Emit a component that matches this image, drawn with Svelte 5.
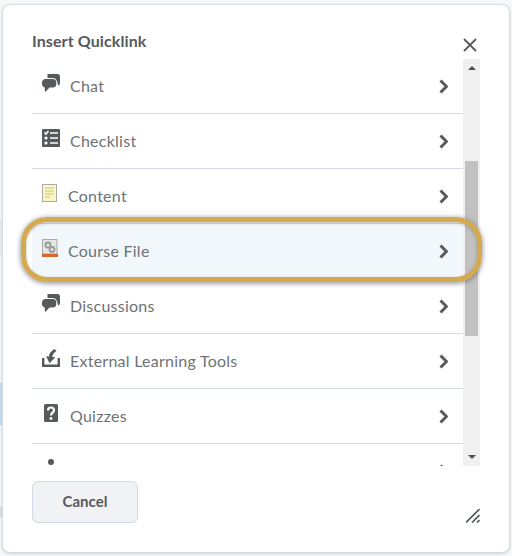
<script>
	const rows = [
		{ name: 'Chat', icon: 'chat' },
		{ name: 'Checklist', icon: 'checklist' },
		{ name: 'Content', icon: 'content', small: true },
		{ name: 'Course File', icon: 'file', small: true, active: true },
		{ name: 'Discussions', icon: 'chat' },
		{ name: 'External Learning Tools', icon: 'external' },
		{ name: 'Quizzes', icon: 'quiz' },
		{ name: '', icon: 'dot' }
	];
</script>

{#snippet icon(kind)}
	<svg class="icon" class:narrow={kind === 'content' || kind === 'file'} width="18" height="18" viewBox="0 0 18 18">
		{#if kind === 'chat'}
			<path fill="#565a5c" d="M5.500 0h10C17 0 18 1 18 2.500V9c0 1.300-.8 2.300-2 2.600C15.800 7.500 14 4 11 4H5.500z" />
			<path fill="#565a5c" d="M3.500 5h7.500c2.200 0 3.300 1.500 3.300 3.500V10c0 2-1.100 3.500-3.300 3.500H7.500l-3.700 4c-.4.400-1 .1-1-.4v-3.700C1.100 13 0 11.600 0 10V8.500C0 6.500 1.500 5 3.500 5z" />
		{:else if kind === 'checklist'}
			<rect width="18" height="18" rx="1" fill="#565a5c" />
			<path fill="none" stroke="#fff" stroke-width="1.600" d="M2.500 3.500 4 5l2.500-3M8 4h8M8 9h8M8 14h8" />
			<circle cx="4" cy="9" r="1.600" fill="#fff" />
			<circle cx="4" cy="14" r="1.600" fill="#fff" />
		{:else if kind === 'content'}
			<rect x=".5" y=".5" width="14" height="17" fill="#fbf7c4" stroke="#a9aca6" />
			<path stroke="#d8d59a" stroke-width="1.500" d="M3 4h9M3 7h9M3 10h9M3 13h5" />
		{:else if kind === 'file'}
			<rect x=".5" y=".5" width="14.500" height="14.500" fill="#e4e4e2" stroke="#a9aca6" />
			<rect y="15" width="16" height="3" fill="#d9652b" />
			<g fill="none" stroke="#9a9c9a" stroke-width="1.800">
				<circle cx="6" cy="6" r="2.500" />
				<circle cx="10" cy="10.500" r="2.500" />
			</g>
		{:else if kind === 'external'}
			<path fill="none" stroke="#565a5c" stroke-width="2.400" d="M1.200 9v7.800h15.600V9" />
			<path fill="#565a5c" d="M12.500 0 14.500 2C11.800 3.500 10.500 5.500 10.300 8l3 .2-5.800 6-3.500-7.300 2.800.8C7 4.500 9.500 1.500 12.500 0z" />
		{:else if kind === 'quiz'}
			<rect x="2" width="14" height="18" rx="1.500" fill="#565a5c" />
			<path fill="none" stroke="#fff" stroke-width="2.200" d="M6 6.500C6 4.500 7.300 3.500 9 3.500s3 1 3 2.800c0 2.400-3 2.400-3 5.200" />
			<circle cx="9" cy="14.500" r="1.400" fill="#fff" />
		{:else}
			<circle cx="9" cy="3" r="3" fill="#565a5c" />
		{/if}
	</svg>
{/snippet}

<div class="page">
	<span class="peek peek-a"></span>
	<span class="peek peek-b"></span>
	<span class="peek peek-c"></span>

	<div class="dialog">
		<header>
			<h2>Insert Quicklink</h2>
			<button class="close" aria-label="Close">
				<svg width="14" height="14" viewBox="0 0 14 14">
					<path stroke="#565a5c" stroke-width="1.800" d="M1 1l12 12M13 1 1 13" />
				</svg>
			</button>
		</header>

		<div class="scroller">
			<ul>
				{#each rows as row}
					<li class:active={row.active} class:small={row.small}>
						{@render icon(row.icon)}
						<span class="name">{row.name}</span>
						<svg class="chevron" width="10" height="15" viewBox="0 0 10 15">
							<path fill="none" stroke="#565a5c" stroke-width="3" d="M2.500 1.500 8.500 7.500l-6 6" />
						</svg>
					</li>
				{/each}
			</ul>
			<div class="scrollbar">
				<svg class="arrow up" width="8" height="4" viewBox="0 0 8 4"><path d="M4 0l4 4H0z" fill="#505050" /></svg>
				<div class="thumb"></div>
				<svg class="arrow down" width="8" height="4" viewBox="0 0 8 4"><path d="M0 0h8L4 4z" fill="#505050" /></svg>
			</div>
			<div class="highlight"></div>
		</div>

		<footer>
			<button class="cancel">Cancel</button>
			<svg class="grip" width="14" height="14" viewBox="0 0 14 14">
				<path stroke="#565a5c" stroke-width="1.700" fill="none" d="M0 13.500 13.500 0M6 13.500 13.500 6M11 13.500l2.500-2.500" />
			</svg>
		</footer>
	</div>
</div>

<style>
	:global(body) {
		background: #f7f8f9;
	}

	.page {
		position: relative;
		width: 512px;
		height: 556px;
		padding: 4px 2px 3px;
		box-sizing: border-box;
		font-family: Lato, 'Open Sans', sans-serif;
		overflow: hidden;
	}

	.peek {
		position: absolute;
		left: 0;
		width: 2px;
	}

	.peek-a {
		top: 220px;
		height: 36px;
		background: #e4e6e8;
	}

	.peek-b {
		top: 383px;
		height: 42px;
		background: #bcd8ee;
	}

	.peek-c {
		top: 507px;
		height: 10px;
		background: #d6d8da;
	}

	.dialog {
		height: 100%;
		box-sizing: border-box;
		background: #fff;
		border: 1px solid #d6dbe2;
		border-radius: 8px;
		box-shadow: 0 1px 3px rgba(86, 90, 92, 0.25);
		padding: 0 29px;
		display: flex;
		flex-direction: column;
	}

	header {
		height: 54px;
		flex: none;
		display: flex;
		justify-content: space-between;
		padding-right: 3px;
	}

	h2 {
		margin: 27px 0 0;
		font-size: 16px;
		line-height: 18px;
		font-weight: 700;
		letter-spacing: 0.1px;
		color: #565a5c;
	}

	.close {
		border: 0;
		padding: 0;
		margin: 33px 0 0;
		height: 14px;
		background: none;
		display: block;
	}

	.close svg {
		display: block;
	}

	.scroller {
		position: relative;
		flex: none;
		height: 407px;
		width: 448px;
		margin-right: -1px;
		display: flex;
	}

	ul {
		list-style: none;
		margin: 0;
		padding: 0;
		flex: 1;
		height: 100%;
		overflow: hidden;
	}

	li {
		height: 54px;
		box-sizing: content-box;
		border-bottom: 1px solid #d3d9e3;
		display: flex;
		align-items: center;
		padding: 0 15px 0 10px;
		color: #6e7275;
		font-size: 16px;
	}

	li.active {
		background: #f2f7fb;
		border-bottom-color: transparent;
	}

	.icon {
		flex: none;
		margin: -6px 10px 0 0;
	}

	.icon.narrow {
		margin-right: 8px;
	}

	.name {
		flex: 1;
		letter-spacing: 0.25px;
		padding-bottom: 2px;
	}

	.chevron {
		flex: none;
	}

	.scrollbar {
		flex: none;
		width: 17px;
		height: 100%;
		background: #f0f0f0;
		position: relative;
	}

	.thumb {
		position: absolute;
		left: 2px;
		right: 2px;
		top: 102px;
		height: 175px;
		background: #c1c1c1;
	}

	.arrow {
		position: absolute;
		left: 5px;
		display: block;
	}

	.up {
		top: 7px;
	}

	.down {
		bottom: 7px;
	}

	.highlight {
		position: absolute;
		left: -11px;
		top: 158px;
		width: 451px;
		height: 55px;
		border: 5px solid #d5a94f;
		border-radius: 26px;
		box-shadow: 0 1px 4px 1px rgba(50, 55, 60, 0.45), inset 0 1px 3px rgba(50, 55, 60, 0.35);
		pointer-events: none;
	}

	footer {
		flex: 1;
		display: flex;
		justify-content: space-between;
		align-items: flex-end;
		padding: 15px 0 29px;
	}

	.cancel {
		width: 106px;
		height: 42px;
		background: #f1f2f5;
		border: 1px solid #d3d9e3;
		border-radius: 6px;
		font-family: inherit;
		font-size: 15px;
		font-weight: 700;
		line-height: 36px;
		color: #565a5c;
		padding: 0 0 3px;
	}

	.grip {
		display: block;
	}
</style>
